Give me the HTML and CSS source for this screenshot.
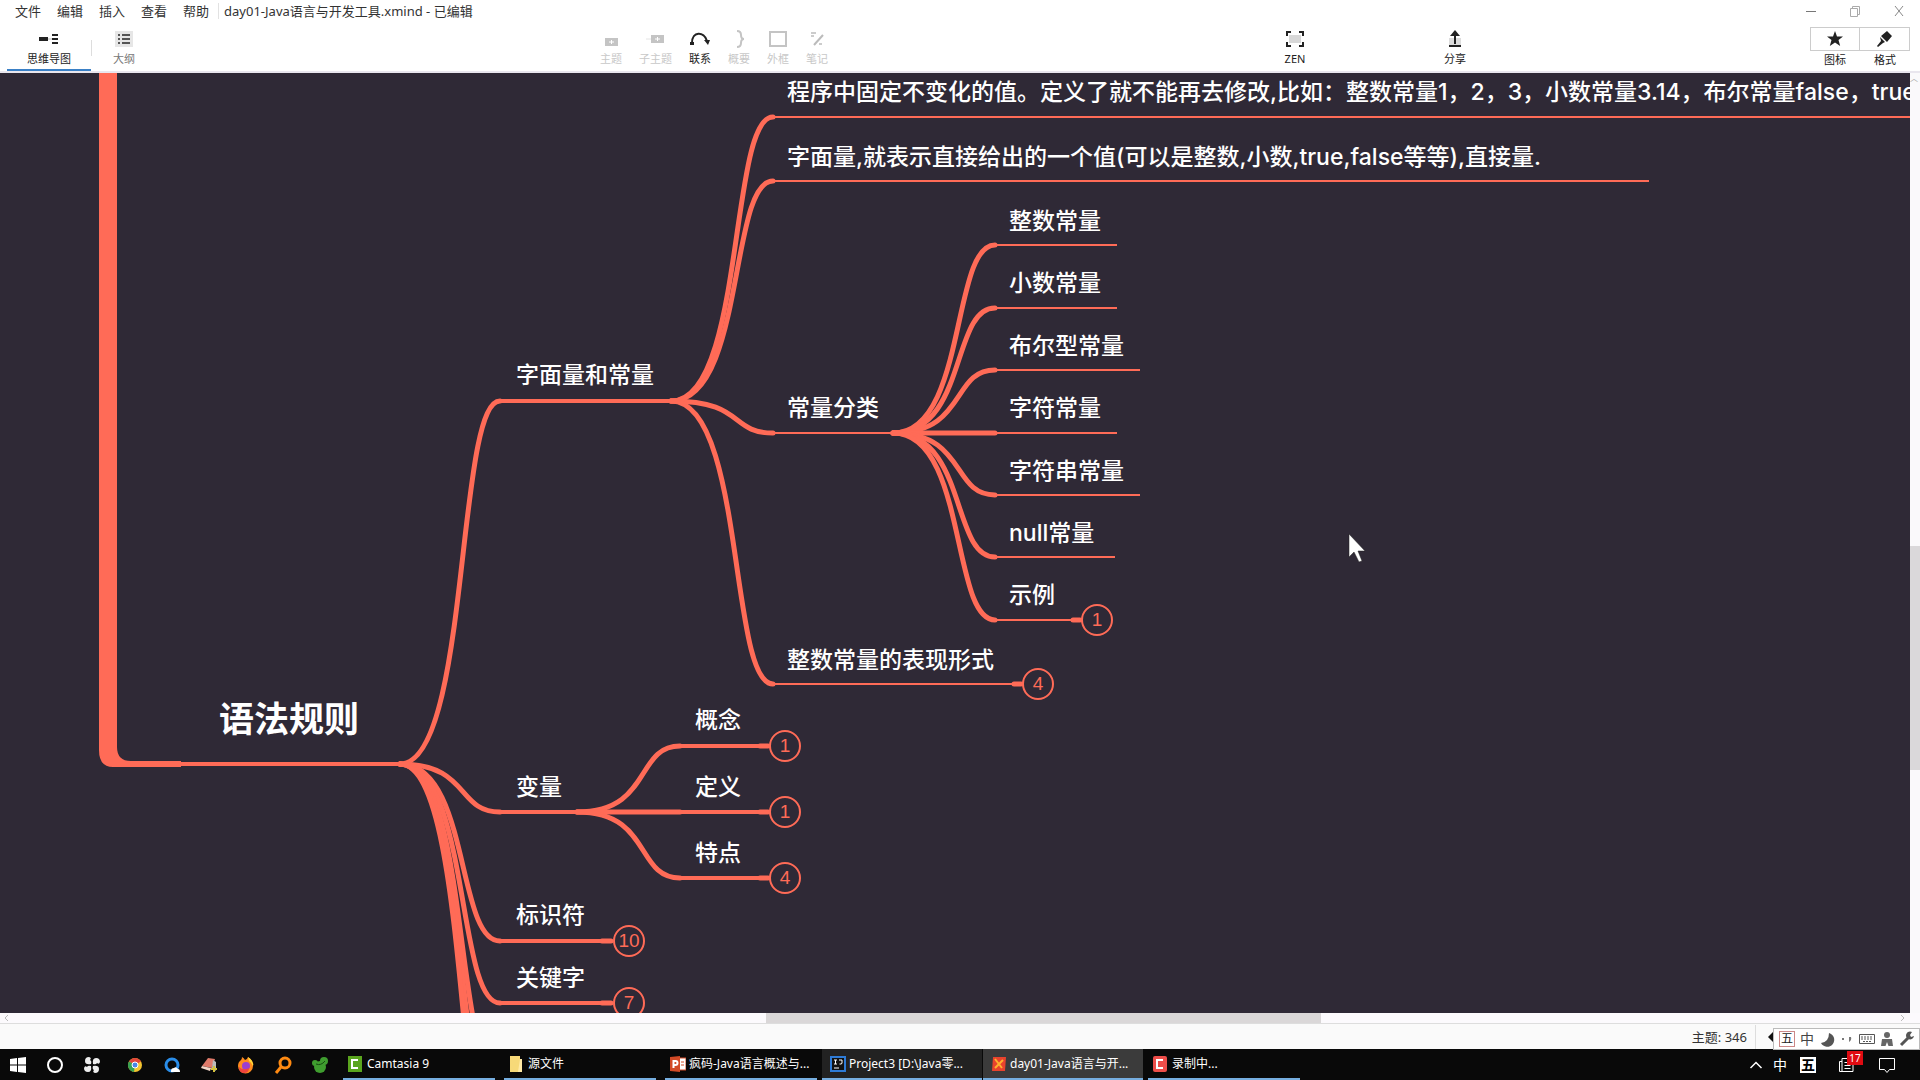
FILE: index.html
```html
<!DOCTYPE html>
<html lang="zh-CN">
<head>
<meta charset="utf-8">
<title>day01-Java语言与开发工具.xmind</title>
<link rel="stylesheet" href="styles.css">
</head>
<body>
<header class="titlebar">
  <nav class="menu">
    <button>文件</button><button>编辑</button><button>插入</button><button>查看</button><button>帮助</button>
  </nav>
  <h1 class="doc-title">day01-Java语言与开发工具.xmind - 已编辑</h1>
  <div class="window-buttons">
    <button aria-label="最小化"><svg width="12" height="12"><path d="M1 6.500h10" stroke="#777"/></svg></button>
    <button aria-label="还原"><svg width="12" height="12" fill="none" stroke="#aaa"><path d="M1.500 3.500h7v8h-7zM3.500 3.500v-2h7v8h-2"/></svg></button>
    <button aria-label="关闭"><svg width="12" height="12"><path d="M2 1l8 10M10 1L2 11" stroke="#888"/></svg></button>
  </div>
</header>

<div class="toolbar">
  <div class="tabs">
    <button class="tool tab active"><svg width="20" height="18"><path d="M0 7h9v4H0zM13 4h6v2h-6zM13 8h6v2h-6zM13 12h6v2h-6z" fill="#222"/><path d="M9 9h4" stroke="#bbb"/></svg>思维导图</button>
    <span class="divider"></span>
    <button class="tool tab outline"><svg width="20" height="18"><path d="M1 1h18v16H1z" fill="#e6e6e6"/><path d="M4 4h2v2H4zM8 4h8v2H8zM4 8h2v2H4zM8 8h8v2H8zM4 12h2v2H4zM8 12h8v2H8z" fill="#555"/></svg>大纲</button>
  </div>
  <div class="tools">
    <button class="tool" disabled><svg width="20" height="18"><path d="M4 8h13v8H4z" fill="#c4c4c4"/><path d="M8 12h5M10.500 10v4" stroke="#fff"/></svg>主题</button>
    <button class="tool" disabled><svg width="24" height="18"><path d="M7 5h13v8H7z" fill="#c4c4c4"/><path d="M11 9h5M13.500 7v4" stroke="#fff"/><path d="M2 9h5" stroke="#e4e4e4"/></svg>子主题</button>
    <button class="tool"><svg width="20" height="18"><path d="M2 13C2 1 14 1 17 11" fill="none" stroke="#222" stroke-width="2"/><path d="M0 12h4v3H0zM14 10l6 0-2 5z" fill="#222"/></svg>联系</button>
    <button class="tool" disabled><svg width="20" height="18"><path d="M8 1q4 0 4 4t3 4q-3 0-3 4t-4 4" fill="none" stroke="#c4c4c4" stroke-width="2"/></svg>概要</button>
    <button class="tool" disabled><svg width="20" height="18"><path d="M2 2h16v14H2z" fill="none" stroke="#c4c4c4" stroke-width="2"/></svg>外框</button>
    <button class="tool" disabled><svg width="20" height="18"><path d="M7 15L16 5" stroke="#bbb" stroke-width="2"/><path d="M4 3h5M4 6h3M15 14h-3" stroke="#ccc" stroke-width="2"/></svg>笔记</button>
  </div>
  <button class="tool zen"><svg width="20" height="18"><path d="M4 5h12v8H4z" fill="#d8d8d8"/><path d="M2 6V2h4M14 2h4v4M18 12v4h-4M6 16H2v-4" fill="none" stroke="#222" stroke-width="2"/></svg>ZEN</button>
  <button class="tool share"><svg width="20" height="18"><path d="M4 8h12v8H4z" fill="#ddd"/><path d="M4 16h12M10 14V3" stroke="#222" stroke-width="2"/><path d="M5 6l5-6 5 6z" fill="#222"/></svg>分享</button>
  <div class="panels">
    <button class="tool panel"><span class="panel-icon"><svg width="18" height="18"><path d="M9 1l2 5.500h6l-4.500 3.500 1.700 6L9 12.500 3.800 16l1.700-6L1 6.500h6z" fill="#222"/></svg></span>图标</button>
    <button class="tool panel"><span class="panel-icon"><svg width="18" height="18"><path d="M11 1l5 5-5 6-6-6zM4 7l5 5-2 1-5 4-1-1 4-5z" fill="#222"/></svg></span>格式</button>
  </div>
</div>

<main class="workspace">
  <div class="canvas">
    <svg class="links" width="1920" height="940" fill="none" stroke="#ff6b57">
      <g transform="translate(0,-73)">
        <path d="M99 60H117V747Q117 761 131 761H181V767H113Q99 767 99 750Z" fill="#ff6b57" stroke="none"/>
        <g stroke-width="4">
          <path d="M180 764H402M498 401H673M500 812H579M680 746H760M680 812H760M680 878H760M500 941H602M500 1003H602"/>
        </g>
        <g stroke-width="2">
          <path d="M773 117H1920M773 181H1649M773 433H895M773 684H1014M995 245H1117M995 308H1117M995 370H1140M995 433H1117M995 495H1140M995 557H1115M995 620H1073"/>
        </g>
        <g stroke-width="5" stroke-linecap="round">
          <path d="M400 764C470 764 456 401 500 401"/>
          <path d="M400 764C470 764 456 812 500 812"/>
          <path d="M400 764C470 764 456 941 500 941"/>
          <path d="M400 764C470 764 456 1003 500 1003"/>
          <path d="M400 764C470 764 454 1076 500 1076"/>
          <path d="M400 764C470 764 454 1128 500 1128"/>
          <path d="M400 764C470 764 456 1190 500 1190"/>
          <path d="M671 401C745 401 729 117 773 117"/>
          <path d="M671 401C745 401 729 181 773 181"/>
          <path d="M671 401C745 401 729 433 773 433"/>
          <path d="M671 401C745 401 729 684 773 684"/>
          <path d="M893 433C967 433 951 245 995 245"/>
          <path d="M893 433C967 433 951 308 995 308"/>
          <path d="M893 433C967 433 951 370 995 370"/>
          <path d="M893 433H995"/>
          <path d="M893 433C967 433 951 495 995 495"/>
          <path d="M893 433C967 433 951 557 995 557"/>
          <path d="M893 433C967 433 951 620 995 620"/>
          <path d="M577 812C652 812 635 746 680 746"/>
          <path d="M577 812H680"/>
          <path d="M577 812C652 812 635 878 680 878"/>
          <path d="M760 746H768M760 812H768M760 878H768M602 941H611M602 1003H611M1073 620H1080M1014 684H1021"/>
        </g>
      </g>
    </svg>
    <div class="topic main-topic">语法规则</div>
    <div class="topic t-literal">字面量和常量</div>
    <div class="topic t-variable">变量</div>
    <div class="topic t-identifier">标识符</div>
    <div class="topic t-keyword">关键字</div>
    <div class="topic t-concept">概念</div>
    <div class="topic t-define">定义</div>
    <div class="topic t-feature">特点</div>
    <div class="topic t-fixed">程序中固定不变化的值。定义了就不能再去修改,比如：整数常量1，2，3，小数常量3.14，布尔常量false，true</div>
    <div class="topic t-direct">字面量,就表示直接给出的一个值(可以是整数,小数,true,false等等),直接量.</div>
    <div class="topic t-kinds">常量分类</div>
    <div class="topic t-forms">整数常量的表现形式</div>
    <div class="topic t-int">整数常量</div>
    <div class="topic t-decimal">小数常量</div>
    <div class="topic t-bool">布尔型常量</div>
    <div class="topic t-char">字符常量</div>
    <div class="topic t-string">字符串常量</div>
    <div class="topic t-null">null常量</div>
    <div class="topic t-example">示例</div>
    <button class="count c-concept">1</button>
    <button class="count c-define">1</button>
    <button class="count c-feature">4</button>
    <button class="count c-identifier">10</button>
    <button class="count c-keyword">7</button>
    <button class="count c-example">1</button>
    <button class="count c-forms">4</button>
    <svg class="pointer" width="20" height="32"><path d="M1 1V24L6 19L11 29L14 28L10 18H17Z" fill="#fff" stroke="#222" stroke-width=".5"/></svg>
  </div>
  <div class="scroll-y"><span class="arrow">︿</span><div class="thumb-y"></div></div>
  <div class="scroll-x">
    <svg width="12" height="10"><path d="M8 2L5 5l3 3" fill="none" stroke="#bbb"/></svg>
    <div class="track-x"><div class="thumb-x"></div></div>
    <svg width="24" height="10"><path d="M5 2l3 3-3 3" fill="none" stroke="#bbb"/></svg>
  </div>
</main>

<footer class="statusbar">
  <span class="topic-total">主题: 346</span>
  <svg class="collapse" width="6" height="12"><path d="M6 0V12L0 6Z" fill="#111"/></svg>
  <div class="ime">
    <span class="ime-wubi">五</span>
    <span class="ime-zh">中</span>
    <svg width="16" height="16"><path d="M10 2a7 7 0 1 1-8 10q8-1 8-10z" fill="#555"/></svg>
    <svg width="16" height="16" fill="#777"><path d="M3 7h2v2H3zM10 6h2q1 3-2 5z"/></svg>
    <svg width="16" height="16"><path d="M.5 3.500h15v9H.5z" fill="none" stroke="#555"/><path d="M2 6h12M2 8h12M4 10.500h8" stroke="#555" stroke-dasharray="2 1"/></svg>
    <svg width="16" height="16" fill="#666"><circle cx="8" cy="4" r="3"/><path d="M3 8h10l1 7H9.500L8 11l-1.500 4H2z"/></svg>
    <svg width="16" height="16"><path d="M2 14l7-7" stroke="#555" stroke-width="3"/><path d="M13 1a4 4 0 1 0 2 4l-3 1-1-2z" fill="#555"/></svg>
  </div>
</footer>

<div class="taskbar">
  <div class="pins">
    <button aria-label="开始"><svg width="20" height="20" fill="#fff"><path d="M2 4l7-1v6.500H2zM10 3l8-1v7.500h-8zM2 10.500h7V17l-7-1zM10 10.500h8V18l-8-1z"/></svg></button>
    <button aria-label="Cortana"><svg width="20" height="20"><circle cx="10" cy="10" r="7" fill="none" stroke="#fff" stroke-width="2"/></svg></button>
    <button class="fan" aria-label="应用"><svg width="20" height="20" fill="#eee"><path d="M9 9Q3 10 3 6t4-4q3 1 1 3 2 1 1 4zM11 9Q10 3 14 3t4 4q-1 3-3 1-1 2-4 1zM11 11q6-1 6 3t-4 4q-3-1-1-3-2-1-1-4zM9 11q1 6-3 6t-4-4q1-3 3-1 1-2 4-1z"/></svg></button>
    <button aria-label="Chrome"><svg width="20" height="20"><circle cx="10" cy="10" r="7" fill="#f4c430"/><path d="M10 10L4 6.400A7 7 0 0 1 16 6.400z" fill="#e2453a"/><path d="M10 10L4 6.400A7 7 0 0 0 9 17z" fill="#36a152"/><circle cx="10" cy="10" r="3" fill="#4a86e8" stroke="#fff"/></svg></button>
    <button aria-label="QQ浏览器"><svg width="20" height="20"><circle cx="10" cy="10" r="6" fill="none" stroke="#2a8de8" stroke-width="3"/><path d="M9 16q0-3 3-3 2-2 4 1 2 0 2 3H9z" fill="#fff"/></svg></button>
    <button aria-label="笔记"><svg width="20" height="20"><path d="M9 3l7 1-3 9-10-2z" fill="#e07a6a"/><path d="M3 11l9 2-1 3-9-3z" fill="#f3d6c8"/><path d="M14 5l3 2v9l-4-3z" fill="#bbb"/><path d="M12 14h6M15 11v6" stroke="#d5c23c" stroke-width="2"/></svg></button>
    <button aria-label="Firefox"><svg width="20" height="20"><path d="M5 5q1-1 1-3 2 1 3 3 2 0 3-3 6 4 5 9a7.500 7.500 0 0 1-15 0q0-4 3-6z" fill="#ff8a1e"/><path d="M12 2q6 4 5 9-2-4-4-5z" fill="#ffd83a"/><circle cx="10" cy="11" r="4" fill="#9b3fd0"/><path d="M3 12q4 4 10 1 0 5-5 5t-5-6z" fill="#f0443e"/></svg></button>
    <button aria-label="搜索"><svg width="20" height="20" fill="none" stroke="#ff8a12" stroke-width="3"><circle cx="12" cy="8" r="5"/><path d="M8 12l-5 6"/></svg></button>
    <button aria-label="图标"><svg width="20" height="20" fill="#3f9d2f"><circle cx="10" cy="12" r="6"/><circle cx="5" cy="8" r="3"/><circle cx="14" cy="6" r="4"/><path d="M6 9q5 2 9-3" stroke="#174d12" fill="none"/></svg></button>
  </div>
  <div class="tasks">
    <button class="task"><svg width="14" height="16"><path d="M0 0h14v16H0z" fill="#5aa51e"/><path d="M10 4H4v8h6" fill="none" stroke="#fff" stroke-width="2"/></svg><span>Camtasia 9</span></button>
    <button class="task"><svg width="14" height="16"><path d="M1 0h10v3h2v13H1z" fill="#f7d978"/><path d="M11 3h2v13h-4z" fill="#ffeaa6"/></svg><span>源文件</span></button>
    <button class="task"><svg width="16" height="16"><path d="M6 2h10v12H6z" fill="#fff" stroke="#d24a26"/><path d="M0 1l10-1v16L0 15z" fill="#d24a26"/><path d="M3.500 12V5h2q2 0 2 2t-2 2h-2" fill="none" stroke="#fff" stroke-width="2"/><path d="M11 6h3M11 9h3" stroke="#d24a26"/></svg><span>疯码-Java语言概述与...</span></button>
    <button class="task wide idea"><svg width="16" height="16"><path d="M1 1h14v14H1z" fill="#111" stroke="#2e7bd6" stroke-width="2"/><path d="M4 4h3M5.500 4v4M4 8h3M9 4h3v3q0 1.500-2.500 1M4 12h5" fill="none" stroke="#fff"/></svg><span>Project3 [D:\Java零...</span></button>
    <button class="task wide current"><svg width="16" height="16"><path d="M2 1h13l-1 14H1z" fill="#e8432d"/><path d="M4 3l7 9M12 4l-8 8" stroke="#ffb02e" stroke-width="2"/></svg><span>day01-Java语言与开...</span></button>
    <button class="task last"><svg width="14" height="16"><rect width="14" height="16" rx="2" fill="#ee4e4a"/><path d="M10 4H4v8h6" fill="none" stroke="#fff" stroke-width="2"/></svg><span>录制中...</span></button>
  </div>
  <div class="tray">
    <svg class="chevron" width="14" height="14"><path d="M1.500 10L7 4.500 12.500 10" fill="none" stroke="#fff" stroke-width="1.500"/></svg>
    <span class="tray-zh">中</span>
    <span class="tray-wubi">五</span>
    <span class="news"><svg width="18" height="18" fill="none" stroke="#fff"><path d="M4 2.500h11v13H4zM4 5.500H1.500v10H15M6.500 6.500h6M6.500 9.500h6M6.500 12.500h6"/></svg><span class="badge">17</span></span>
    <svg class="notice" width="18" height="18"><path d="M1.500 2.500h15v11h-5l-2.500 3-2.500-3h-5z" fill="none" stroke="#fff"/></svg>
  </div>
</div>
</body>
</html>
```
FILE: styles.css
```css
* { box-sizing: border-box; }
body {
  margin: 0;
  height: 100vh;
  display: flex;
  flex-direction: column;
  overflow: hidden;
  background: #fff;
  color: #333;
  font: 13px/16px "Noto Sans", "Noto Sans CJK SC", sans-serif;
}
button {
  margin: 0;
  padding: 0;
  border: 0;
  background: none;
  color: inherit;
  font: inherit;
}
svg { display: block; flex: none; }

/* title bar */
.titlebar { display: flex; align-items: center; height: 24px; flex: none; padding: 0 0 2px 15px; }
.menu { display: flex; gap: 16px; }
.doc-title {
  margin: 0 0 0 9px;
  padding-left: 5px;
  border-left: 1px solid #e2e2e2;
  font-size: 13px;
  font-weight: 400;
}
.window-buttons { display: flex; gap: 32px; margin-left: auto; padding-right: 15px; }

/* toolbar */
.toolbar {
  display: grid;
  grid-template-columns: 600px 1fr 22px 138px 22px 344px 110px;
  height: 49px;
  flex: none;
  border-bottom: 2px solid #e9e6ee;
}
.tool {
  display: flex;
  flex-direction: column;
  align-items: center;
  gap: 3px;
  padding-top: 6px;
  font-size: 11px;
  white-space: nowrap;
  color: #222;
}
.tool:disabled { color: #c8c8c8; }
.tabs { display: flex; padding-left: 7px; }
.tab.active { width: 84px; border-bottom: 2px solid #3a80c6; }
.divider { width: 1px; height: 16px; margin-top: 16px; background: #ddd; }
.outline { width: 64px; color: #777; }
.tools { display: flex; gap: 17px; }
.tools .tool { min-width: 22px; }
.zen { grid-column: 3; }
.share { grid-column: 5; }
.panels { grid-column: 7; display: flex; }
.panel { width: 50px; padding-top: 3px; gap: 1px; }
.panel-icon {
  display: flex;
  justify-content: center;
  align-items: center;
  width: 100%;
  height: 24px;
  border: 1px solid #ccc;
}
.panel + .panel .panel-icon { border-left: 0; }

/* map area */
.workspace {
  flex: 1;
  min-height: 0;
  display: grid;
  grid-template: 1fr 11px / 1fr 10px;
}
.canvas { position: relative; overflow: hidden; background: #2f2936; }
.links { position: absolute; left: 0; top: 0; }
.topic {
  position: absolute;
  color: #fff;
  font: 500 23px/30px "Inter", "Noto Sans CJK SC", sans-serif;
  white-space: nowrap;
}
.main-topic { left: 219px; top: 626px; font-size: 35px; line-height: 40px; font-weight: 700; }
.t-literal { left: 516px; top: 287px; }
.t-variable { left: 516px; top: 699px; }
.t-identifier { left: 516px; top: 827px; }
.t-keyword { left: 516px; top: 890px; }
.t-concept { left: 695px; top: 632px; }
.t-define { left: 695px; top: 699px; }
.t-feature { left: 695px; top: 765px; }
.t-fixed { left: 787px; top: 4px; }
.t-direct { left: 787px; top: 69px; }
.t-kinds { left: 787px; top: 320px; }
.t-forms { left: 787px; top: 572px; }
.t-int { left: 1009px; top: 133px; }
.t-decimal { left: 1009px; top: 195px; }
.t-bool { left: 1009px; top: 258px; }
.t-char { left: 1009px; top: 320px; }
.t-string { left: 1009px; top: 383px; }
.t-null { left: 1009px; top: 445px; }
.t-example { left: 1009px; top: 507px; }
.count {
  position: absolute;
  width: 32px;
  height: 32px;
  border: 2px solid #ff6b57;
  border-radius: 50%;
  color: #ff6b57;
  font: 19px/28px "Liberation Sans", sans-serif;
}
.c-concept { left: 769px; top: 657px; }
.c-define { left: 769px; top: 723px; }
.c-feature { left: 769px; top: 789px; }
.c-identifier { left: 613px; top: 852px; }
.c-keyword { left: 613px; top: 914px; }
.c-example { left: 1081px; top: 531px; }
.c-forms { left: 1022px; top: 595px; }
.pointer { position: absolute; left: 1348px; top: 460px; }

.scroll-y { display: flex; flex-direction: column; overflow: hidden; background: #faf9fb; }
.arrow { height: 473px; font-size: 8px; line-height: 10px; color: #aaa; }
.thumb-y { height: 224px; background: #dad8da; }
.scroll-x { grid-column: 1 / -1; display: flex; background: #fcfafd; border-bottom: 1px solid #ddd; }
.track-x { flex: 1; }
.thumb-x { width: calc(30% - 10px); height: 100%; margin-left: 40%; background: #dad7d8; }

/* status bar */
.statusbar {
  position: relative;
  display: flex;
  align-items: center;
  justify-content: flex-end;
  height: 25px;
  flex: none;
  background: #fafafa;
}
.topic-total { padding-right: 8px; border-right: 1px solid #ddd; line-height: 24px; }
.collapse { margin: 0 146px 0 12px; }
.ime {
  position: absolute;
  right: 0;
  top: 4px;
  z-index: 1;
  display: flex;
  align-items: center;
  gap: 4px;
  width: 147px;
  height: 22px;
  padding-left: 5px;
  border: 1px solid #bbb;
  background: #fff;
  color: #444;
}
.ime-wubi { width: 16px; border: 1px solid #c88; font-size: 12px; line-height: 14px; text-align: center; color: #222; }
.ime-zh { width: 16px; font-size: 14px; text-align: center; }

/* taskbar */
.taskbar { display: flex; height: 31px; flex: none; background: #090909; color: #fff; }
.pins { display: flex; align-items: center; gap: 17px; width: 343px; padding-left: 8px; }
.fan { margin-right: 6px; }
.tasks { display: flex; gap: 9px; }
.task {
  display: flex;
  align-items: center;
  gap: 3px;
  width: 152px;
  padding-left: 5px;
  border-bottom: 2px solid #76aee0;
  font-size: 12px;
  white-space: nowrap;
}
.task svg { width: 16px; }
.task.wide { width: 160px; padding-left: 8px; }
.task.idea { margin-left: -4px; background: #222; }
.task.current { margin-left: -8px; background: #3b3b3b; }
.task.last { margin-left: -4px; }
.tray { display: flex; align-items: center; margin-left: auto; padding-right: 24px; }
.tray-zh { margin: 0 13px 0 10px; font-size: 14px; }
.tray-wubi { width: 16px; background: #fff; color: #000; font-size: 14px; font-weight: 700; text-align: center; }
.news { position: relative; margin: 0 22px; }
.badge {
  position: absolute;
  left: 9px;
  top: -5px;
  width: 16px;
  background: #e00b12;
  font-size: 10px;
  line-height: 14px;
  text-align: center;
}
```
